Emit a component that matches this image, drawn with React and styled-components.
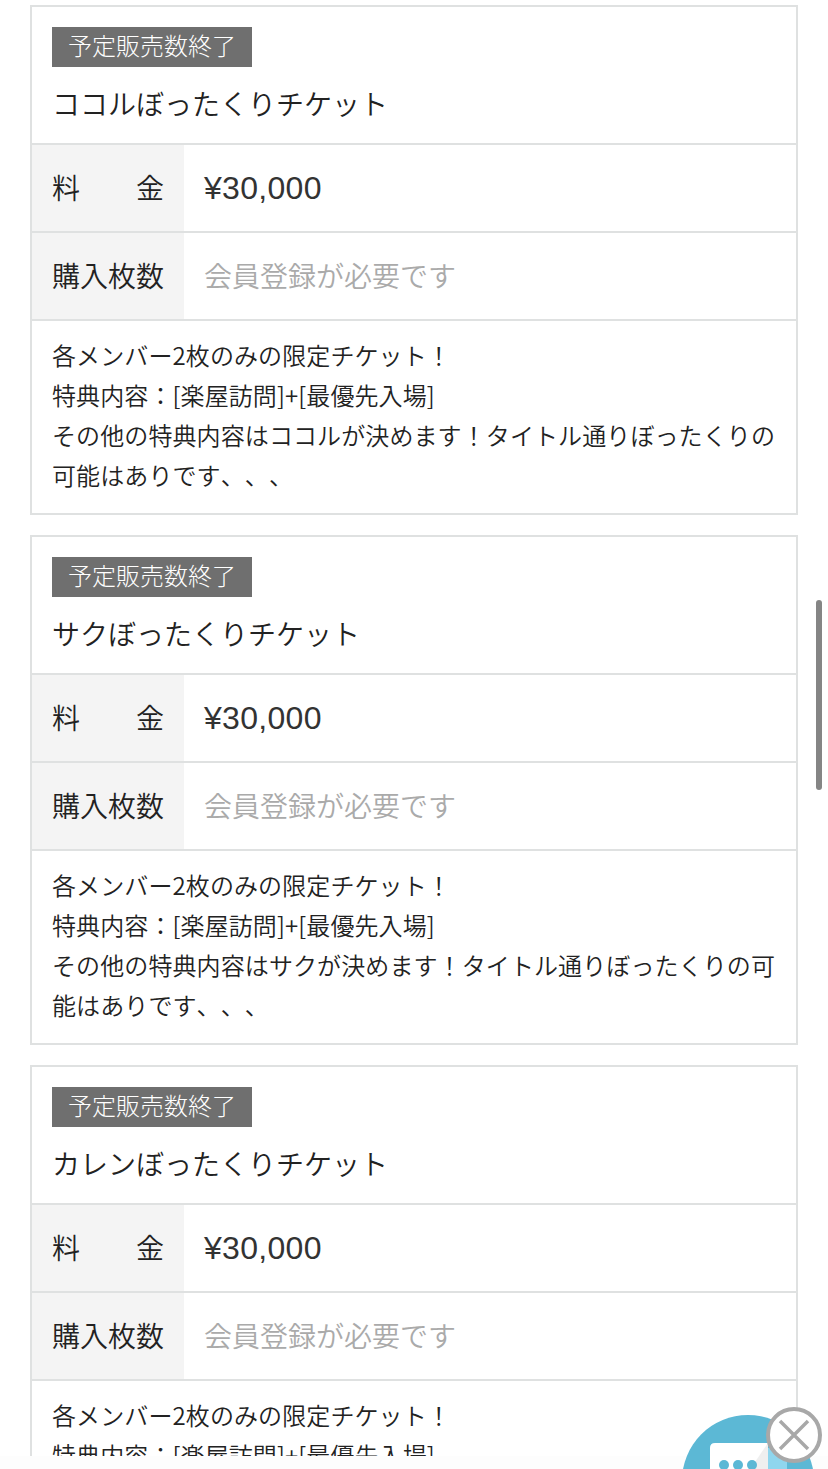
import React from "react"
import styled, { createGlobalStyle } from "styled-components"

const GlobalStyle = createGlobalStyle`
  html, body {
    margin: 0;
    padding: 0;
    height: 100%;
    overflow: hidden;
    background: #fff;
  }
  body {
    font-family: "Noto Sans CJK JP", "Liberation Sans", sans-serif;
    font-weight: 350;
    color: #222;
    text-spacing-trim: space-all;
    font-kerning: none;
  }
`;

const tickets = [
  {
    name: "ココルぼったくりチケット",
    note: ["その他の特典内容はココルが決めます！タイトル通りぼったくりの", "可能はありです、、、"],
  },
  {
    name: "サクぼったくりチケット",
    note: ["その他の特典内容はサクが決めます！タイトル通りぼったくりの可", "能はありです、、、"],
  },
  {
    name: "カレンぼったくりチケット",
    note: ["その他の特典内容はカレンが決めます！タイトル通りぼったくりの", "可能はありです、、、"],
  },
];

const Ticket = ({ ticket }) => (
  <Card>
    <CardHead>
      <Badge>予定販売数終了</Badge>
      <Title>{ticket.name}</Title>
    </CardHead>
    <Row>
      <Label><span>料</span><span>金</span></Label>
      <Price>¥30,000</Price>
    </Row>
    <Row>
      <Label><span>購入枚数</span></Label>
      <Notice>会員登録が必要です</Notice>
    </Row>
    <Description>
      <p>各メンバー2枚のみの限定チケット！</p>
      <p>特典内容：[楽屋訪問]+[最優先入場]</p>
      {ticket.note.map(line => <p key={line}>{line}</p>)}
    </Description>
  </Card>
);

const App = () => (
  <>
    <GlobalStyle />
    <Page>
      {tickets.map(ticket => <Ticket key={ticket.name} ticket={ticket} />)}
    </Page>
    <ScrollThumb />
    <BottomBar />
    <ChatButton>
      <svg width="132" height="132" viewBox="0 0 132 132">
        <circle cx="66" cy="66" r="66" fill="#5cb8d5" />
        <path d="M80 33 H100 Q105 33 105 38 V90 H80 Z" fill="#8fd6ee" />
        <path d="M33 28 H86 V90 H28 V33 Q28 28 33 28 Z" fill="#fff" />
        <path d="M86 28 L60 66 V90 H86 Z" fill="#efefef" />
        <circle cx="42" cy="50" r="5" fill="#5cb8d5" />
        <circle cx="56" cy="50" r="5" fill="#5cb8d5" />
        <circle cx="70" cy="50" r="5" fill="#5cb8d5" />
      </svg>
    </ChatButton>
    <CloseButton>
      <svg width="56" height="56" viewBox="0 0 56 56">
        <circle cx="28" cy="28" r="26" fill="#fff" stroke="#a8a8a8" strokeWidth="4" />
        <path d="M14 14 L42 42 M42 14 L14 42" stroke="#a8a8a8" strokeWidth="3.5" />
      </svg>
    </CloseButton>
  </>
);

const Page = styled.div`
  display: flex;
  flex-direction: column;
  gap: 20px;
  width: 768px;
  margin-left: 30px;
  padding-top: 5px;
`;

const Card = styled.section`
  border: 2px solid #dfe1e1;
  background: #fff;
`;

const CardHead = styled.header`
  height: 136px;
  box-sizing: border-box;
  padding: 20px 20px 0;
`;

const Badge = styled.div`
  width: 200px;
  height: 40px;
  background: #6f6f6f;
  color: #fff;
  font-size: 24px;
  font-weight: 300;
  line-height: 36px;
  text-align: center;
`;

const Title = styled.h2`
  margin: 16px 0 0;
  font-size: 28px;
  font-weight: 350;
  line-height: 40px;
  color: #222;
`;

const Row = styled.div`
  display: flex;
  height: 88px;
  box-sizing: border-box;
  border-top: 2px solid #dfe1e1;
`;

const Label = styled.div`
  display: flex;
  justify-content: space-between;
  align-items: center;
  flex: 0 0 152px;
  box-sizing: border-box;
  padding: 0 20px 2px;
  background: #f4f4f4;
  font-size: 28px;
`;

const Price = styled.div`
  display: flex;
  align-items: center;
  padding-left: 20px;
  font-family: "Liberation Sans", sans-serif;
  font-weight: 400;
  font-size: 32px;
  letter-spacing: 0.3px;
  color: #333;
`;

const Notice = styled.div`
  display: flex;
  align-items: center;
  padding: 0 0 2px 20px;
  font-size: 28px;
  color: #aaa;
`;

const Description = styled.div`
  border-top: 2px solid #dfe1e1;
  padding: 14px 20px 18px;
  font-size: 24px;
  line-height: 40px;
  letter-spacing: 0.1px;
  color: #222;
  p {
    margin: 0;
    white-space: nowrap;
  }
`;

const ScrollThumb = styled.div`
  position: fixed;
  top: 600px;
  left: 816px;
  width: 6px;
  height: 190px;
  border-radius: 3px;
  background: #858585;
`;

const BottomBar = styled.div`
  position: fixed;
  left: 0;
  right: 0;
  top: 1456px;
  bottom: 0;
  background: #fdfdfd;
`;

const ChatButton = styled.div`
  position: fixed;
  left: 682px;
  top: 1415px;
  width: 132px;
  height: 132px;
`;

const CloseButton = styled.div`
  position: fixed;
  left: 766px;
  top: 1407px;
  width: 56px;
  height: 56px;
`;

export default App;
